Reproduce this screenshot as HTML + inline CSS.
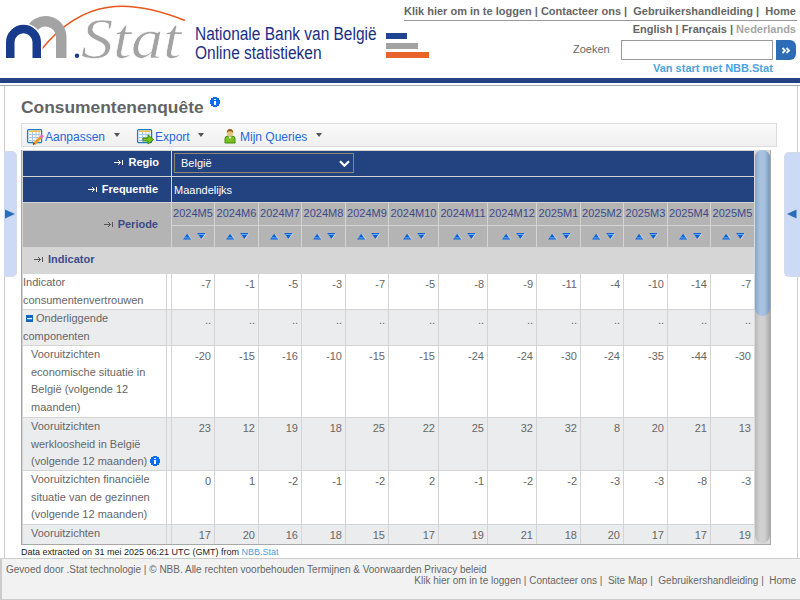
<!DOCTYPE html>
<html><head><meta charset="utf-8">
<style>
*{box-sizing:border-box}
html,body{margin:0;padding:0;width:800px;height:600px;overflow:hidden;background:#fff;font-family:"Liberation Sans",sans-serif}
.abs{position:absolute}
#logo{position:absolute;left:0;top:0}
#bank{position:absolute;left:195px;top:25px;font-size:18px;line-height:19px;color:#1b2e86;white-space:nowrap;transform:scaleX(0.86);transform-origin:0 0}
.bar{position:absolute;left:386px;height:6px}
#toplinks{left:404px;top:5px;width:393px;font-size:11px;font-weight:bold;color:#666;white-space:nowrap;border-bottom:1px solid #999;height:16px}
#lang{right:4px;top:23px;font-size:11px;font-weight:bold;color:#666;white-space:nowrap}
#lang .cur{color:#a6a6a6}
#zoek{left:573px;top:43px;font-size:11px;color:#666}
#input{left:621px;top:40px;width:152px;height:20px;border:1px solid #999;background:#fff}
#btn{left:776px;top:40px;width:20px;height:20px;background:#2d6db8;border-radius:0 6px 6px 0}
#start{left:653px;top:62px;font-size:11px;font-weight:bold;color:#4aa3df;white-space:nowrap}
#bar1{left:0;top:78px;width:800px;height:5px;background:#234286}
#bar2{left:0;top:85px;width:800px;height:1px;background:#aaa}
#cont{left:4px;top:86px;width:794px;height:472px;border-left:1px solid #ccc;border-right:1px solid #ccc}
#title{left:21px;top:97px;font-size:17.4px;font-weight:bold;color:#646464;white-space:nowrap}
#info1{left:210px;top:97px}
#toolbar{left:21px;top:123px;width:756px;height:24px;border:1px solid #ddd;background:linear-gradient(#fafafa,#f0f0f0)}
.tb{position:absolute;top:130px;font-size:12px;color:#2567dc;white-space:nowrap}
.tri{position:absolute;top:132.8px;width:0;height:0;border-left:3.6px solid transparent;border-right:3.6px solid transparent;border-top:4.4px solid #555}
#tabl{left:4px;top:151px;width:13px;height:126px;background:#cddaf5;border-radius:0 5px 5px 0;border:1px solid #d5dbe6;border-left:none}
#tabr{left:784px;top:152px;width:16px;height:125px;background:#cddaf5;border-radius:5px 0 0 5px;border:1px solid #d5dbe6;border-right:none}
#grid{position:absolute;left:21px;top:150px;width:734px;height:394px;background:#d4d4d4;border-left:1px solid #a8a8a8;overflow:hidden}
#gridb{position:absolute;left:21px;top:544px;width:750px;height:1px;background:#a8a8a8}
.c{position:absolute;overflow:hidden;white-space:nowrap}
.hl{color:#fff;font-size:11px;font-weight:bold;text-align:right;padding-right:13px;line-height:25px}
.hp{color:#3d4b8a;font-size:11px;font-weight:bold;text-align:right;padding-right:13px;line-height:42px}
.txt{position:absolute;white-space:nowrap;font-size:11px}
.wt{color:#fff}
.sel{position:absolute;left:152px;top:3px;width:180px;height:20px;border:1px solid #8c8670;color:#fff;font-size:11px;line-height:18px;padding-left:6px}
.chev{position:absolute;right:3px;top:6px}
.per{background:#b4b4b4;color:#3d4b8a;font-size:11px;text-align:center;line-height:20px}
.srt{position:absolute;left:0;top:0;width:100%;height:100%;text-align:center;padding-left:2px;font-size:0}
.up{display:inline-block;margin-top:7px;vertical-align:top}
.dn{display:inline-block;margin-top:7px;margin-left:5px;vertical-align:top}
.arr{display:inline-block;vertical-align:middle;margin-right:5px;position:relative;top:0px}
.minus{display:inline-block;margin:0 3px 0 3px;vertical-align:middle;position:relative;top:-1px}
.info2{display:inline-block;vertical-align:middle;position:relative;top:-1px}
.ind{color:#3d4b8a;font-weight:bold}
.lab{color:#666;line-height:17.6px;padding-top:0px}
.val{color:#666;font-size:11px;text-align:right;padding-right:3px;padding-top:1px;line-height:18px}
#sb{position:absolute;left:754px;top:150px;width:17px;height:394px;background:#d9d9d9;border-right:1px solid #a9a9a9}
#track{position:absolute;left:1px;top:0;width:15px;height:393px;border-radius:7.5px;background:linear-gradient(90deg,#b9b9b9,#d2d2d2 35%,#cfcfcf 65%,#a9a9a9)}
#thumb{position:absolute;left:1px;top:0;width:15px;height:166px;border-radius:7.5px;background:linear-gradient(90deg,#86a5c8,#a9c4e2 35%,#a6c1df 65%,#7896ba)}
#dataex{left:21px;top:547px;font-size:9px;color:#222;white-space:nowrap}
#dataex a{color:#4aa3df;text-decoration:none}
#footer{left:0;top:558px;width:802px;height:42px;background:#f2f2f2;border:1px solid #ccc;border-left:2px solid #ccc}
#f1{left:6px;top:564px;font-size:10px;color:#666;white-space:nowrap}
#f2{right:4px;top:575px;font-size:10px;color:#666;white-space:nowrap}

</style></head><body>
<svg id="logo" width="195" height="70" viewBox="0 0 195 70">
<clipPath id="cl"><rect x="0" y="0" width="185" height="50"/></clipPath>
<path d="M41 50 C83.5 -3.15 130.5 -1.13 185 20.5" fill="none" stroke="#e8571a" stroke-width="1.4"/>
<path d="M30.7 31.6 A15.75 15.75 0 0 1 61.25 37 L61.25 58" fill="none" stroke="#a3a3a3" stroke-width="10.5"/>
<path d="M10.25 58 L10.25 42.3 A13.25 13.25 0 0 1 36.75 42.3 L36.75 60" fill="none" stroke="#fff" stroke-width="11.5"/>
<path d="M10.25 58 L10.25 42.3 A13.25 13.25 0 0 1 36.75 42.3 L36.75 58" fill="none" stroke="#183b8e" stroke-width="8.5"/>
<rect x="0" y="58" width="70" height="10" fill="#fff"/>
<circle cx="77" cy="55.8" r="2.2" fill="#183b8e"/>
<text x="81" y="58" font-family="Liberation Serif" font-style="italic" font-size="57" fill="#a3a3a3" stroke="#fff" stroke-width="0.6" textLength="100" lengthAdjust="spacingAndGlyphs">Stat</text>
</svg>
<div id="bank">Nationale Bank van België<br>Online statistieken</div>
<div class="bar" style="top:33px;width:21px;background:#1f4592"></div>
<div class="bar" style="top:43px;width:32px;background:#a3a3a3"></div>
<div class="bar" style="top:52px;width:43px;background:#e8642c"></div>
<div id="toplinks" class="abs">Klik hier om in te loggen | Contacteer ons |&nbsp; Gebruikershandleiding |&nbsp; Home</div>
<div id="lang" class="abs">English | Français | <span class="cur">Nederlands</span></div>
<div id="zoek" class="abs">Zoeken</div>
<div id="input" class="abs"></div>
<div id="btn" class="abs"><svg width="20" height="20" viewBox="0 0 20 20"><path d="M6.5 8 L9 10.5 L6.5 13 M10.5 8 L13 10.5 L10.5 13" stroke="#fff" stroke-width="1.8" fill="none"/></svg></div>
<div id="start" class="abs">Van start met NBB.Stat</div>
<div id="bar1" class="abs"></div>
<div id="bar2" class="abs"></div>
<div id="cont" class="abs"></div>
<div id="title" class="abs">Consumentenenquête</div>
<svg class="abs" id="info1" width="10" height="10" viewBox="0 0 10 10" shape-rendering="crispEdges"><path d="M3 0H7V1H9V3H10V7H9V9H7V10H3V9H1V7H0V3H1V1H3Z" fill="#0b6ef0"/><rect x="4" y="2" width="2" height="1" fill="#fff"/><rect x="4" y="4" width="2" height="4" fill="#fff"/></svg>
<div id="toolbar" class="abs"></div>
<svg class="abs" style="left:26px;top:128px" width="18" height="17" viewBox="0 0 18 17">
<rect x="1.6" y="1.6" width="14" height="13" rx="1" fill="#fff" stroke="#1b7bc4" stroke-width="1.3"/>
<rect x="3" y="2.5" width="11.5" height="1.4" fill="#f5b82e"/>
<path d="M3 6.5 H14.5 M3 9.5 H14.5 M3 12.5 H9 M6.5 4 V14 M10 4 V11 M13 4 V8" stroke="#a9c6e6" stroke-width="1"/>
<path d="M8 16 L15.5 8.5" stroke="#f29a1c" stroke-width="3"/>
<path d="M14.5 9.5 L16.8 7.2" stroke="#e46cc0" stroke-width="3"/>
<path d="M7 16.5 L8.5 15" stroke="#6b4a2a" stroke-width="1.5"/>
</svg>
<div class="tb" style="left:45px">Aanpassen</div><div class="tri" style="left:114px"></div>
<svg class="abs" style="left:136px;top:128px" width="19" height="17" viewBox="0 0 19 17">
<rect x="1.6" y="1.6" width="14" height="13" rx="1" fill="#fff" stroke="#1b7bc4" stroke-width="1.3"/>
<rect x="3" y="2.5" width="11.5" height="1.4" fill="#f5b82e"/>
<path d="M3 6.5 H14.5 M3 9.5 H14.5 M3 12.5 H9 M6.5 4 V14 M10 4 V11 M13 4 V8" stroke="#a9c6e6" stroke-width="1"/>
<path d="M7 10 H12 V7 L17.5 11.5 L12 16 V13 H7 Z" fill="#7cc21a" stroke="#3f8a0c" stroke-width="1"/>
</svg>
<div class="tb" style="left:155px">Export</div><div class="tri" style="left:198px"></div>
<svg class="abs" style="left:224px;top:128px" width="12" height="16" viewBox="0 0 12 16">
<path d="M1 15 V10.5 Q1 8 4 8 H8 Q11 8 11 10.5 V15 Z" fill="#7ac020" stroke="#3f8a0c" stroke-width="1"/>
<path d="M4.5 8.5 L6 11 L7.5 8.5 Z" fill="#fff"/>
<ellipse cx="6" cy="5" rx="2.8" ry="3.3" fill="#e8c27a"/>
<path d="M2.8 5.5 Q2.5 1 6 1 Q9.5 1 9.2 5.5 Q8.5 3 6 3.2 Q3.5 3 2.8 5.5 Z" fill="#9a5a1c"/>
</svg>
<div class="tb" style="left:240px">Mijn Queries</div><div class="tri" style="left:316px"></div>
<div id="tabl" class="abs"><svg style="position:absolute;left:1px;top:57px" width="10" height="10" viewBox="0 0 10 10"><path d="M0 0.5 L10 5 L0 9.5Z" fill="#2a6ebb"/></svg></div>
<div id="tabr" class="abs"><svg style="position:absolute;left:2px;top:56px" width="10" height="10" viewBox="0 0 10 10"><path d="M9.5 0.5 L0 5 L9.5 9.5Z" fill="#2a6ebb"/></svg></div>
<div id="dataex" class="abs">Data extracted on 31 mei 2025 06:21 UTC (GMT) from <a>NBB.Stat</a></div>
<div id="footer" class="abs"></div>
<div id="f1" class="abs">Gevoed door .Stat technologie | © NBB. Alle rechten voorbehouden Termijnen &amp; Voorwaarden Privacy beleid</div>
<div id="f2" class="abs">Klik hier om in te loggen | Contacteer ons |&nbsp; Site Map |&nbsp; Gebruikershandleiding |&nbsp; Home</div>

<div id="grid"><div class="c" style="left:1px;top:1px;width:148px;height:25px;background:#234280"></div><div class="c hl" style="left:1px;top:0px;width:148px;height:25px;padding-right:12px"><svg class="arr" width="9" height="6" viewBox="0 0 9 6"><path d="M0 2.5 H6.5 M4 0 L6.5 2.5 L4 5 M8.5 0 V5" stroke="#fff" stroke-width="1" fill="none"/></svg>Regio</div><div class="c" style="left:150px;top:1px;width:583px;height:25px;background:#234280"></div><div class="sel"><span>België</span><svg class="chev" width="11" height="8" viewBox="0 0 11 8"><path d="M1 1.2 L5.5 5.8 L10 1.2" stroke="#fff" stroke-width="2.2" fill="none"/></svg></div><div class="c" style="left:1px;top:27px;width:148px;height:25px;background:#234280"></div><div class="c hl" style="left:1px;top:27px;width:148px;height:25px"><svg class="arr" width="9" height="6" viewBox="0 0 9 6"><path d="M0 2.5 H6.5 M4 0 L6.5 2.5 L4 5 M8.5 0 V5" stroke="#fff" stroke-width="1" fill="none"/></svg>Frequentie</div><div class="c" style="left:150px;top:27px;width:583px;height:25px;background:#234280"></div><div class="txt wt" style="left:152px;top:34px">Maandelijks</div><div class="c" style="left:1px;top:53px;width:148px;height:44px;background:#b4b4b4"></div><div class="c hp" style="left:1px;top:53px;width:148px;height:44px"><svg class="arr" width="9" height="6" viewBox="0 0 9 6"><path d="M0 2.5 H6.5 M4 0 L6.5 2.5 L4 5 M8.5 0 V5" stroke="#555" stroke-width="1" fill="none"/></svg>Periode</div><div class="c per" style="left:150px;top:53px;width:42px;height:22px">2024M5</div><div class="c" style="left:150px;top:76px;width:42px;height:21px;background:#b4b4b4"><div class="srt"><svg class="up" width="9" height="7" viewBox="0 0 9 7"><path d="M4.3 0.6 L8.4 6.6 H0.2 Z" fill="#0d62da"/><path d="M1.6 4.9 H6.9" stroke="#6fb2f7" stroke-width="0.9"/><path d="M4.6 0.6 L8.8 6.6" stroke="#f2f2f2" stroke-width="0.7" opacity="0.8"/></svg><svg class="dn" width="9" height="7" viewBox="0 0 9 7"><path d="M0.2 0 H8.6 L4.4 6 Z" fill="#0d62da"/><path d="M1.5 1.5 H7.3" stroke="#6fb2f7" stroke-width="0.9"/><path d="M8.9 0.3 L4.7 6.3" stroke="#f2f2f2" stroke-width="0.7" opacity="0.8"/></svg></div></div><div class="c per" style="left:193px;top:53px;width:43px;height:22px">2024M6</div><div class="c" style="left:193px;top:76px;width:43px;height:21px;background:#b4b4b4"><div class="srt"><svg class="up" width="9" height="7" viewBox="0 0 9 7"><path d="M4.3 0.6 L8.4 6.6 H0.2 Z" fill="#0d62da"/><path d="M1.6 4.9 H6.9" stroke="#6fb2f7" stroke-width="0.9"/><path d="M4.6 0.6 L8.8 6.6" stroke="#f2f2f2" stroke-width="0.7" opacity="0.8"/></svg><svg class="dn" width="9" height="7" viewBox="0 0 9 7"><path d="M0.2 0 H8.6 L4.4 6 Z" fill="#0d62da"/><path d="M1.5 1.5 H7.3" stroke="#6fb2f7" stroke-width="0.9"/><path d="M8.9 0.3 L4.7 6.3" stroke="#f2f2f2" stroke-width="0.7" opacity="0.8"/></svg></div></div><div class="c per" style="left:237px;top:53px;width:42px;height:22px">2024M7</div><div class="c" style="left:237px;top:76px;width:42px;height:21px;background:#b4b4b4"><div class="srt"><svg class="up" width="9" height="7" viewBox="0 0 9 7"><path d="M4.3 0.6 L8.4 6.6 H0.2 Z" fill="#0d62da"/><path d="M1.6 4.9 H6.9" stroke="#6fb2f7" stroke-width="0.9"/><path d="M4.6 0.6 L8.8 6.6" stroke="#f2f2f2" stroke-width="0.7" opacity="0.8"/></svg><svg class="dn" width="9" height="7" viewBox="0 0 9 7"><path d="M0.2 0 H8.6 L4.4 6 Z" fill="#0d62da"/><path d="M1.5 1.5 H7.3" stroke="#6fb2f7" stroke-width="0.9"/><path d="M8.9 0.3 L4.7 6.3" stroke="#f2f2f2" stroke-width="0.7" opacity="0.8"/></svg></div></div><div class="c per" style="left:280px;top:53px;width:43px;height:22px">2024M8</div><div class="c" style="left:280px;top:76px;width:43px;height:21px;background:#b4b4b4"><div class="srt"><svg class="up" width="9" height="7" viewBox="0 0 9 7"><path d="M4.3 0.6 L8.4 6.6 H0.2 Z" fill="#0d62da"/><path d="M1.6 4.9 H6.9" stroke="#6fb2f7" stroke-width="0.9"/><path d="M4.6 0.6 L8.8 6.6" stroke="#f2f2f2" stroke-width="0.7" opacity="0.8"/></svg><svg class="dn" width="9" height="7" viewBox="0 0 9 7"><path d="M0.2 0 H8.6 L4.4 6 Z" fill="#0d62da"/><path d="M1.5 1.5 H7.3" stroke="#6fb2f7" stroke-width="0.9"/><path d="M8.9 0.3 L4.7 6.3" stroke="#f2f2f2" stroke-width="0.7" opacity="0.8"/></svg></div></div><div class="c per" style="left:324px;top:53px;width:42px;height:22px">2024M9</div><div class="c" style="left:324px;top:76px;width:42px;height:21px;background:#b4b4b4"><div class="srt"><svg class="up" width="9" height="7" viewBox="0 0 9 7"><path d="M4.3 0.6 L8.4 6.6 H0.2 Z" fill="#0d62da"/><path d="M1.6 4.9 H6.9" stroke="#6fb2f7" stroke-width="0.9"/><path d="M4.6 0.6 L8.8 6.6" stroke="#f2f2f2" stroke-width="0.7" opacity="0.8"/></svg><svg class="dn" width="9" height="7" viewBox="0 0 9 7"><path d="M0.2 0 H8.6 L4.4 6 Z" fill="#0d62da"/><path d="M1.5 1.5 H7.3" stroke="#6fb2f7" stroke-width="0.9"/><path d="M8.9 0.3 L4.7 6.3" stroke="#f2f2f2" stroke-width="0.7" opacity="0.8"/></svg></div></div><div class="c per" style="left:367px;top:53px;width:49px;height:22px">2024M10</div><div class="c" style="left:367px;top:76px;width:49px;height:21px;background:#b4b4b4"><div class="srt"><svg class="up" width="9" height="7" viewBox="0 0 9 7"><path d="M4.3 0.6 L8.4 6.6 H0.2 Z" fill="#0d62da"/><path d="M1.6 4.9 H6.9" stroke="#6fb2f7" stroke-width="0.9"/><path d="M4.6 0.6 L8.8 6.6" stroke="#f2f2f2" stroke-width="0.7" opacity="0.8"/></svg><svg class="dn" width="9" height="7" viewBox="0 0 9 7"><path d="M0.2 0 H8.6 L4.4 6 Z" fill="#0d62da"/><path d="M1.5 1.5 H7.3" stroke="#6fb2f7" stroke-width="0.9"/><path d="M8.9 0.3 L4.7 6.3" stroke="#f2f2f2" stroke-width="0.7" opacity="0.8"/></svg></div></div><div class="c per" style="left:417px;top:53px;width:48px;height:22px">2024M11</div><div class="c" style="left:417px;top:76px;width:48px;height:21px;background:#b4b4b4"><div class="srt"><svg class="up" width="9" height="7" viewBox="0 0 9 7"><path d="M4.3 0.6 L8.4 6.6 H0.2 Z" fill="#0d62da"/><path d="M1.6 4.9 H6.9" stroke="#6fb2f7" stroke-width="0.9"/><path d="M4.6 0.6 L8.8 6.6" stroke="#f2f2f2" stroke-width="0.7" opacity="0.8"/></svg><svg class="dn" width="9" height="7" viewBox="0 0 9 7"><path d="M0.2 0 H8.6 L4.4 6 Z" fill="#0d62da"/><path d="M1.5 1.5 H7.3" stroke="#6fb2f7" stroke-width="0.9"/><path d="M8.9 0.3 L4.7 6.3" stroke="#f2f2f2" stroke-width="0.7" opacity="0.8"/></svg></div></div><div class="c per" style="left:466px;top:53px;width:48px;height:22px">2024M12</div><div class="c" style="left:466px;top:76px;width:48px;height:21px;background:#b4b4b4"><div class="srt"><svg class="up" width="9" height="7" viewBox="0 0 9 7"><path d="M4.3 0.6 L8.4 6.6 H0.2 Z" fill="#0d62da"/><path d="M1.6 4.9 H6.9" stroke="#6fb2f7" stroke-width="0.9"/><path d="M4.6 0.6 L8.8 6.6" stroke="#f2f2f2" stroke-width="0.7" opacity="0.8"/></svg><svg class="dn" width="9" height="7" viewBox="0 0 9 7"><path d="M0.2 0 H8.6 L4.4 6 Z" fill="#0d62da"/><path d="M1.5 1.5 H7.3" stroke="#6fb2f7" stroke-width="0.9"/><path d="M8.9 0.3 L4.7 6.3" stroke="#f2f2f2" stroke-width="0.7" opacity="0.8"/></svg></div></div><div class="c per" style="left:515px;top:53px;width:43px;height:22px">2025M1</div><div class="c" style="left:515px;top:76px;width:43px;height:21px;background:#b4b4b4"><div class="srt"><svg class="up" width="9" height="7" viewBox="0 0 9 7"><path d="M4.3 0.6 L8.4 6.6 H0.2 Z" fill="#0d62da"/><path d="M1.6 4.9 H6.9" stroke="#6fb2f7" stroke-width="0.9"/><path d="M4.6 0.6 L8.8 6.6" stroke="#f2f2f2" stroke-width="0.7" opacity="0.8"/></svg><svg class="dn" width="9" height="7" viewBox="0 0 9 7"><path d="M0.2 0 H8.6 L4.4 6 Z" fill="#0d62da"/><path d="M1.5 1.5 H7.3" stroke="#6fb2f7" stroke-width="0.9"/><path d="M8.9 0.3 L4.7 6.3" stroke="#f2f2f2" stroke-width="0.7" opacity="0.8"/></svg></div></div><div class="c per" style="left:559px;top:53px;width:42px;height:22px">2025M2</div><div class="c" style="left:559px;top:76px;width:42px;height:21px;background:#b4b4b4"><div class="srt"><svg class="up" width="9" height="7" viewBox="0 0 9 7"><path d="M4.3 0.6 L8.4 6.6 H0.2 Z" fill="#0d62da"/><path d="M1.6 4.9 H6.9" stroke="#6fb2f7" stroke-width="0.9"/><path d="M4.6 0.6 L8.8 6.6" stroke="#f2f2f2" stroke-width="0.7" opacity="0.8"/></svg><svg class="dn" width="9" height="7" viewBox="0 0 9 7"><path d="M0.2 0 H8.6 L4.4 6 Z" fill="#0d62da"/><path d="M1.5 1.5 H7.3" stroke="#6fb2f7" stroke-width="0.9"/><path d="M8.9 0.3 L4.7 6.3" stroke="#f2f2f2" stroke-width="0.7" opacity="0.8"/></svg></div></div><div class="c per" style="left:602px;top:53px;width:43px;height:22px">2025M3</div><div class="c" style="left:602px;top:76px;width:43px;height:21px;background:#b4b4b4"><div class="srt"><svg class="up" width="9" height="7" viewBox="0 0 9 7"><path d="M4.3 0.6 L8.4 6.6 H0.2 Z" fill="#0d62da"/><path d="M1.6 4.9 H6.9" stroke="#6fb2f7" stroke-width="0.9"/><path d="M4.6 0.6 L8.8 6.6" stroke="#f2f2f2" stroke-width="0.7" opacity="0.8"/></svg><svg class="dn" width="9" height="7" viewBox="0 0 9 7"><path d="M0.2 0 H8.6 L4.4 6 Z" fill="#0d62da"/><path d="M1.5 1.5 H7.3" stroke="#6fb2f7" stroke-width="0.9"/><path d="M8.9 0.3 L4.7 6.3" stroke="#f2f2f2" stroke-width="0.7" opacity="0.8"/></svg></div></div><div class="c per" style="left:646px;top:53px;width:42px;height:22px">2025M4</div><div class="c" style="left:646px;top:76px;width:42px;height:21px;background:#b4b4b4"><div class="srt"><svg class="up" width="9" height="7" viewBox="0 0 9 7"><path d="M4.3 0.6 L8.4 6.6 H0.2 Z" fill="#0d62da"/><path d="M1.6 4.9 H6.9" stroke="#6fb2f7" stroke-width="0.9"/><path d="M4.6 0.6 L8.8 6.6" stroke="#f2f2f2" stroke-width="0.7" opacity="0.8"/></svg><svg class="dn" width="9" height="7" viewBox="0 0 9 7"><path d="M0.2 0 H8.6 L4.4 6 Z" fill="#0d62da"/><path d="M1.5 1.5 H7.3" stroke="#6fb2f7" stroke-width="0.9"/><path d="M8.9 0.3 L4.7 6.3" stroke="#f2f2f2" stroke-width="0.7" opacity="0.8"/></svg></div></div><div class="c per" style="left:689px;top:53px;width:43px;height:22px">2025M5</div><div class="c" style="left:689px;top:76px;width:43px;height:21px;background:#b4b4b4"><div class="srt"><svg class="up" width="9" height="7" viewBox="0 0 9 7"><path d="M4.3 0.6 L8.4 6.6 H0.2 Z" fill="#0d62da"/><path d="M1.6 4.9 H6.9" stroke="#6fb2f7" stroke-width="0.9"/><path d="M4.6 0.6 L8.8 6.6" stroke="#f2f2f2" stroke-width="0.7" opacity="0.8"/></svg><svg class="dn" width="9" height="7" viewBox="0 0 9 7"><path d="M0.2 0 H8.6 L4.4 6 Z" fill="#0d62da"/><path d="M1.5 1.5 H7.3" stroke="#6fb2f7" stroke-width="0.9"/><path d="M8.9 0.3 L4.7 6.3" stroke="#f2f2f2" stroke-width="0.7" opacity="0.8"/></svg></div></div><div class="c" style="left:1px;top:98px;width:732px;height:26px;background:#d6d6d6"></div><div class="txt ind" style="left:12px;top:103px"><svg class="arr" width="9" height="6" viewBox="0 0 9 6"><path d="M0 2.5 H6.5 M4 0 L6.5 2.5 L4 5 M8.5 0 V5" stroke="#555" stroke-width="1" fill="none"/></svg>Indicator</div><div class="c" style="left:1px;top:124px;width:143px;height:35px;background:#fff"></div><div class="c" style="left:145px;top:124px;width:4px;height:35px;background:#fff"></div><div class="txt lab" style="left:1px;top:124px">Indicator<br>consumentenvertrouwen</div><div class="c val" style="left:150px;top:124px;width:42px;height:35px;background:#fff">-7</div><div class="c val" style="left:193px;top:124px;width:43px;height:35px;background:#fff">-1</div><div class="c val" style="left:237px;top:124px;width:42px;height:35px;background:#fff">-5</div><div class="c val" style="left:280px;top:124px;width:43px;height:35px;background:#fff">-3</div><div class="c val" style="left:324px;top:124px;width:42px;height:35px;background:#fff">-7</div><div class="c val" style="left:367px;top:124px;width:49px;height:35px;background:#fff">-5</div><div class="c val" style="left:417px;top:124px;width:48px;height:35px;background:#fff">-8</div><div class="c val" style="left:466px;top:124px;width:48px;height:35px;background:#fff">-9</div><div class="c val" style="left:515px;top:124px;width:43px;height:35px;background:#fff">-11</div><div class="c val" style="left:559px;top:124px;width:42px;height:35px;background:#fff">-4</div><div class="c val" style="left:602px;top:124px;width:43px;height:35px;background:#fff">-10</div><div class="c val" style="left:646px;top:124px;width:42px;height:35px;background:#fff">-14</div><div class="c val" style="left:689px;top:124px;width:43px;height:35px;background:#fff">-7</div><div class="c" style="left:1px;top:160px;width:143px;height:35px;background:#ebecee"></div><div class="c" style="left:145px;top:160px;width:4px;height:35px;background:#ebecee"></div><div class="txt lab" style="left:1px;top:160px"><svg class='minus' width='7' height='7' viewBox='0 0 7 7'><rect width='7' height='7' fill='#1565c0'/><rect x='1' y='3' width='5' height='1.2' fill='#fff'/></svg>Onderliggende<br>componenten</div><div class="c val" style="left:150px;top:160px;width:42px;height:35px;background:#ebecee">..</div><div class="c val" style="left:193px;top:160px;width:43px;height:35px;background:#ebecee">..</div><div class="c val" style="left:237px;top:160px;width:42px;height:35px;background:#ebecee">..</div><div class="c val" style="left:280px;top:160px;width:43px;height:35px;background:#ebecee">..</div><div class="c val" style="left:324px;top:160px;width:42px;height:35px;background:#ebecee">..</div><div class="c val" style="left:367px;top:160px;width:49px;height:35px;background:#ebecee">..</div><div class="c val" style="left:417px;top:160px;width:48px;height:35px;background:#ebecee">..</div><div class="c val" style="left:466px;top:160px;width:48px;height:35px;background:#ebecee">..</div><div class="c val" style="left:515px;top:160px;width:43px;height:35px;background:#ebecee">..</div><div class="c val" style="left:559px;top:160px;width:42px;height:35px;background:#ebecee">..</div><div class="c val" style="left:602px;top:160px;width:43px;height:35px;background:#ebecee">..</div><div class="c val" style="left:646px;top:160px;width:42px;height:35px;background:#ebecee">..</div><div class="c val" style="left:689px;top:160px;width:43px;height:35px;background:#ebecee">..</div><div class="c" style="left:1px;top:196px;width:143px;height:71px;background:#fff"></div><div class="c" style="left:145px;top:196px;width:4px;height:71px;background:#fff"></div><div class="txt lab" style="left:9px;top:196px">Vooruitzichten<br>economische situatie in<br>België (volgende 12<br>maanden)</div><div class="c val" style="left:150px;top:196px;width:42px;height:71px;background:#fff">-20</div><div class="c val" style="left:193px;top:196px;width:43px;height:71px;background:#fff">-15</div><div class="c val" style="left:237px;top:196px;width:42px;height:71px;background:#fff">-16</div><div class="c val" style="left:280px;top:196px;width:43px;height:71px;background:#fff">-10</div><div class="c val" style="left:324px;top:196px;width:42px;height:71px;background:#fff">-15</div><div class="c val" style="left:367px;top:196px;width:49px;height:71px;background:#fff">-15</div><div class="c val" style="left:417px;top:196px;width:48px;height:71px;background:#fff">-24</div><div class="c val" style="left:466px;top:196px;width:48px;height:71px;background:#fff">-24</div><div class="c val" style="left:515px;top:196px;width:43px;height:71px;background:#fff">-30</div><div class="c val" style="left:559px;top:196px;width:42px;height:71px;background:#fff">-24</div><div class="c val" style="left:602px;top:196px;width:43px;height:71px;background:#fff">-35</div><div class="c val" style="left:646px;top:196px;width:42px;height:71px;background:#fff">-44</div><div class="c val" style="left:689px;top:196px;width:43px;height:71px;background:#fff">-30</div><div class="c" style="left:1px;top:268px;width:143px;height:52px;background:#ebecee"></div><div class="c" style="left:145px;top:268px;width:4px;height:52px;background:#ebecee"></div><div class="txt lab" style="left:9px;top:268px">Vooruitzichten<br>werkloosheid in België<br>(volgende 12 maanden) <svg class='info2'  width='10' height='10' viewBox='0 0 10 10' shape-rendering='crispEdges'><path d='M3 0H7V1H9V3H10V7H9V9H7V10H3V9H1V7H0V3H1V1H3Z' fill='#0b6ef0'/><rect x='4' y='2' width='2' height='1' fill='#fff'/><rect x='4' y='4' width='2' height='4' fill='#fff'/></svg></div><div class="c val" style="left:150px;top:268px;width:42px;height:52px;background:#ebecee">23</div><div class="c val" style="left:193px;top:268px;width:43px;height:52px;background:#ebecee">12</div><div class="c val" style="left:237px;top:268px;width:42px;height:52px;background:#ebecee">19</div><div class="c val" style="left:280px;top:268px;width:43px;height:52px;background:#ebecee">18</div><div class="c val" style="left:324px;top:268px;width:42px;height:52px;background:#ebecee">25</div><div class="c val" style="left:367px;top:268px;width:49px;height:52px;background:#ebecee">22</div><div class="c val" style="left:417px;top:268px;width:48px;height:52px;background:#ebecee">25</div><div class="c val" style="left:466px;top:268px;width:48px;height:52px;background:#ebecee">32</div><div class="c val" style="left:515px;top:268px;width:43px;height:52px;background:#ebecee">32</div><div class="c val" style="left:559px;top:268px;width:42px;height:52px;background:#ebecee">8</div><div class="c val" style="left:602px;top:268px;width:43px;height:52px;background:#ebecee">20</div><div class="c val" style="left:646px;top:268px;width:42px;height:52px;background:#ebecee">21</div><div class="c val" style="left:689px;top:268px;width:43px;height:52px;background:#ebecee">13</div><div class="c" style="left:1px;top:321px;width:143px;height:53px;background:#fff"></div><div class="c" style="left:145px;top:321px;width:4px;height:53px;background:#fff"></div><div class="txt lab" style="left:9px;top:321px">Vooruitzichten financiële<br>situatie van de gezinnen<br>(volgende 12 maanden)</div><div class="c val" style="left:150px;top:321px;width:42px;height:53px;background:#fff">0</div><div class="c val" style="left:193px;top:321px;width:43px;height:53px;background:#fff">1</div><div class="c val" style="left:237px;top:321px;width:42px;height:53px;background:#fff">-2</div><div class="c val" style="left:280px;top:321px;width:43px;height:53px;background:#fff">-1</div><div class="c val" style="left:324px;top:321px;width:42px;height:53px;background:#fff">-2</div><div class="c val" style="left:367px;top:321px;width:49px;height:53px;background:#fff">2</div><div class="c val" style="left:417px;top:321px;width:48px;height:53px;background:#fff">-1</div><div class="c val" style="left:466px;top:321px;width:48px;height:53px;background:#fff">-2</div><div class="c val" style="left:515px;top:321px;width:43px;height:53px;background:#fff">-2</div><div class="c val" style="left:559px;top:321px;width:42px;height:53px;background:#fff">-3</div><div class="c val" style="left:602px;top:321px;width:43px;height:53px;background:#fff">-3</div><div class="c val" style="left:646px;top:321px;width:42px;height:53px;background:#fff">-8</div><div class="c val" style="left:689px;top:321px;width:43px;height:53px;background:#fff">-3</div><div class="c" style="left:1px;top:375px;width:143px;height:35px;background:#ebecee"></div><div class="c" style="left:145px;top:375px;width:4px;height:35px;background:#ebecee"></div><div class="txt lab" style="left:9px;top:375px">Vooruitzichten</div><div class="c val" style="left:150px;top:375px;width:42px;height:35px;background:#ebecee">17</div><div class="c val" style="left:193px;top:375px;width:43px;height:35px;background:#ebecee">20</div><div class="c val" style="left:237px;top:375px;width:42px;height:35px;background:#ebecee">16</div><div class="c val" style="left:280px;top:375px;width:43px;height:35px;background:#ebecee">18</div><div class="c val" style="left:324px;top:375px;width:42px;height:35px;background:#ebecee">15</div><div class="c val" style="left:367px;top:375px;width:49px;height:35px;background:#ebecee">17</div><div class="c val" style="left:417px;top:375px;width:48px;height:35px;background:#ebecee">19</div><div class="c val" style="left:466px;top:375px;width:48px;height:35px;background:#ebecee">21</div><div class="c val" style="left:515px;top:375px;width:43px;height:35px;background:#ebecee">18</div><div class="c val" style="left:559px;top:375px;width:42px;height:35px;background:#ebecee">20</div><div class="c val" style="left:602px;top:375px;width:43px;height:35px;background:#ebecee">17</div><div class="c val" style="left:646px;top:375px;width:42px;height:35px;background:#ebecee">17</div><div class="c val" style="left:689px;top:375px;width:43px;height:35px;background:#ebecee">19</div></div><div id="sb"><div id="track"></div><div id="thumb"></div></div><div id="gridb"></div>
</body></html>
